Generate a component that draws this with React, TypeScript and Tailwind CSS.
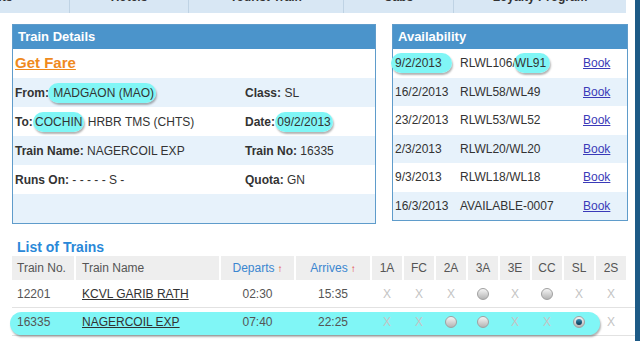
import React from 'react'

const Hl = ({ children, className = '' }: { children: React.ReactNode; className?: string }) => (
    <span className={`bg-[#80f6f6] rounded-[10px] py-[3px] shadow-[1px_2px_2px_rgba(0,0,0,0.3)] ${className}`}>
        {children}
    </span>
)

const Radio = ({ on }: { on?: boolean }) => (
    <span className="inline-flex w-[12px] h-[12px] rounded-full border border-[#a0a0a0] bg-linear-to-b from-[#f5f5f5] to-[#b5b5b5] items-center justify-center">
        {on && <span className="w-[6px] h-[6px] rounded-full bg-linear-to-b from-[#3a8fb8] to-[#06364f]" />}
    </span>
)

const X = () => <span className="text-[#c4c4c4] text-[12px]">X</span>

const navItems = [
    { label: 'Flights', cls: 'w-[70px] justify-start', inner: '-ml-[27px]' },
    { label: 'Hotels', cls: 'w-[119px] justify-center', inner: '' },
    { label: 'Tourist Train', cls: 'w-[155px] justify-center', inner: '' },
    { label: 'Cabs', cls: 'w-[110px] justify-center', inner: '' },
    { label: 'Loyalty Program', cls: 'w-[172px] justify-center', inner: '' },
]

const avail = [
    ['9/2/2013', 'RLWL106/WL91'],
    ['16/2/2013', 'RLWL58/WL49'],
    ['23/2/2013', 'RLWL53/WL52'],
    ['2/3/2013', 'RLWL20/WL20'],
    ['9/3/2013', 'RLWL18/WL18'],
    ['16/3/2013', 'AVAILABLE-0007'],
]

const classes = ['1A', 'FC', '2A', '3A', '3E', 'CC', 'SL', '2S']

const trains = [
    { no: '12201', name: 'KCVL GARIB RATH', dep: '02:30', arr: '15:35', seats: ['x', 'x', 'x', 'r', 'x', 'r', 'x', 'x'] },
    { no: '16335', name: 'NAGERCOIL EXP', dep: '07:40', arr: '22:25', seats: ['x', 'x', 'r', 'r', 'x', 'x', 's', 'x'], mark: true },
]

const Label = ({ k, v }: { k: string; v: React.ReactNode }) => (
    <span>
        <b className="font-bold">{k}</b> {v}
    </span>
)

export default function App() {
    return (
        <div className="w-[640px] h-[341px] overflow-hidden bg-white flex text-[#333] text-[12px]" style={{ fontFamily: '"Liberation Sans", Arial, sans-serif' }}>
            <div className="w-[635px]">
                {/* top nav, mostly cut off */}
                <div className="flex w-[626px] h-[13px] bg-[#d8e7f4] overflow-hidden">
                    {navItems.map((n, i) => (
                        <div key={n.label} className={`flex ${n.cls} ${i < navItems.length - 1 ? 'border-r border-[#bfd3e4]' : ''}`}>
                            <span className={`-mt-[10px] leading-[14px] font-bold text-[12px] text-[#333] whitespace-nowrap ${n.inner}`}>{n.label}</span>
                        </div>
                    ))}
                </div>

                <div className="flex gap-[16px] pl-[12px] mt-[11px]">
                    {/* train details */}
                    <div className="w-[364px] border border-[#5f9ccb]">
                        <div className="h-[24px] bg-[#4b94cb] text-white font-bold text-[13px] flex items-center pl-[5px]">Train Details</div>
                        <div className="h-[29px] flex items-center pl-[2px]">
                            <span className="text-[#ef8a1d] font-bold text-[15px] underline">Get Fare</span>
                        </div>
                        <div className="h-[29px] bg-[#e7f2fb] flex items-center pl-[2px]">
                            <div className="w-[230px]">
                                <b className="font-bold">From:</b><Hl className="px-[2px] -ml-[1px]"> MADGAON (MAO) </Hl>
                            </div>
                            <Label k="Class:" v="SL" />
                        </div>
                        <div className="h-[29px] flex items-center pl-[2px]">
                            <div className="w-[230px]">
                                <b className="font-bold">To:</b> <Hl className="-ml-[3px] px-[2px]">COCHIN</Hl> HRBR TMS (CHTS)
                            </div>
                            <span>
                                <b className="font-bold">Date:</b> <Hl className="-ml-[3px] px-[2px]">09/2/2013</Hl>
                            </span>
                        </div>
                        <div className="h-[29px] bg-[#e7f2fb] flex items-center pl-[2px]">
                            <div className="w-[230px]"><Label k="Train Name:" v="NAGERCOIL EXP" /></div>
                            <Label k="Train No:" v="16335" />
                        </div>
                        <div className="h-[29px] flex items-center pl-[2px]">
                            <div className="w-[230px]"><Label k="Runs On:" v="- - - - - S -" /></div>
                            <Label k="Quota:" v="GN" />
                        </div>
                        <div className="h-[29px] bg-[#e7f2fb]" />
                    </div>

                    {/* availability */}
                    <div className="w-[236px] border border-[#5f9ccb] self-start">
                        <div className="h-[24px] bg-[#4b94cb] text-white font-bold text-[13px] flex items-center pl-[5px]">Availability</div>
                        {avail.map(([d, s], i) => (
                            <div key={d} className={`h-[28.5px] flex items-center pl-[2px] ${i % 2 ? 'bg-[#e7f2fb]' : ''}`}>
                                <div className="w-[65px]">
                                    {i === 0 ? <Hl className="-ml-[4px] pl-[4px] pr-[10px]">{d}</Hl> : d}
                                </div>
                                <div className="w-[123px]">
                                    {i === 0 ? (
                                        <>RLWL106/<Hl className="-ml-[2px] pl-[1px] pr-[4px]">WL91</Hl></>
                                    ) : s}
                                </div>
                                <a className="text-[#3a3ab8] underline">Book</a>
                            </div>
                        ))}
                    </div>
                </div>

                {/* list of trains */}
                <div className="pl-[12px]">
                    <div className="mt-[14px] h-[18px] flex items-center pl-[5px] text-[#2a88d8] font-bold text-[14px]">List of Trains</div>
                    <div className="grid grid-cols-[62px_143px_73px_74px_repeat(8,30px)] gap-x-[2px] h-[24px] text-[#555]">
                        <div className="bg-[#eeeeee] flex items-center pl-[5px]">Train No.</div>
                        <div className="bg-[#eeeeee] flex items-center pl-[6px]">Train Name</div>
                        <div className="bg-[#eeeeee] flex items-center justify-center text-[#3a86d0]">Departs<span className="text-[#e03030] text-[10px] ml-[3px]">↑</span></div>
                        <div className="bg-[#eeeeee] flex items-center justify-center text-[#3a86d0]">Arrives<span className="text-[#e03030] text-[10px] ml-[3px]">↑</span></div>
                        {classes.map(c => (
                            <div key={c} className="bg-[#eeeeee] flex items-center justify-center">{c}</div>
                        ))}
                    </div>
                    {trains.map(t => (
                        <div key={t.no} className="relative grid grid-cols-[62px_143px_73px_74px_repeat(8,30px)] gap-x-[2px] h-[28px] border-b border-[#e2e2e2] text-[#555]">
                            {t.mark && (
                                <div className="absolute left-[-2px] top-[4px] w-[590px] h-[23px] rounded-[12px] bg-[#80f6f6] shadow-[1px_2px_2px_rgba(0,0,0,0.3)]" />
                            )}
                            <div className="relative flex items-center pl-[5px]">{t.no}</div>
                            <div className="relative flex items-center pl-[6px]"><span className="underline text-[#333]">{t.name}</span></div>
                            <div className="relative flex items-center justify-center">{t.dep}</div>
                            <div className="relative flex items-center justify-center">{t.arr}</div>
                            {t.seats.map((s, i) => (
                                <div key={i} className="relative flex items-center justify-center">
                                    {s === 'x' ? <X /> : <Radio on={s === 's'} />}
                                </div>
                            ))}
                        </div>
                    ))}
                </div>
            </div>
            <div className="w-[5px] bg-[#1d5a86]" />
        </div>
    )
}
